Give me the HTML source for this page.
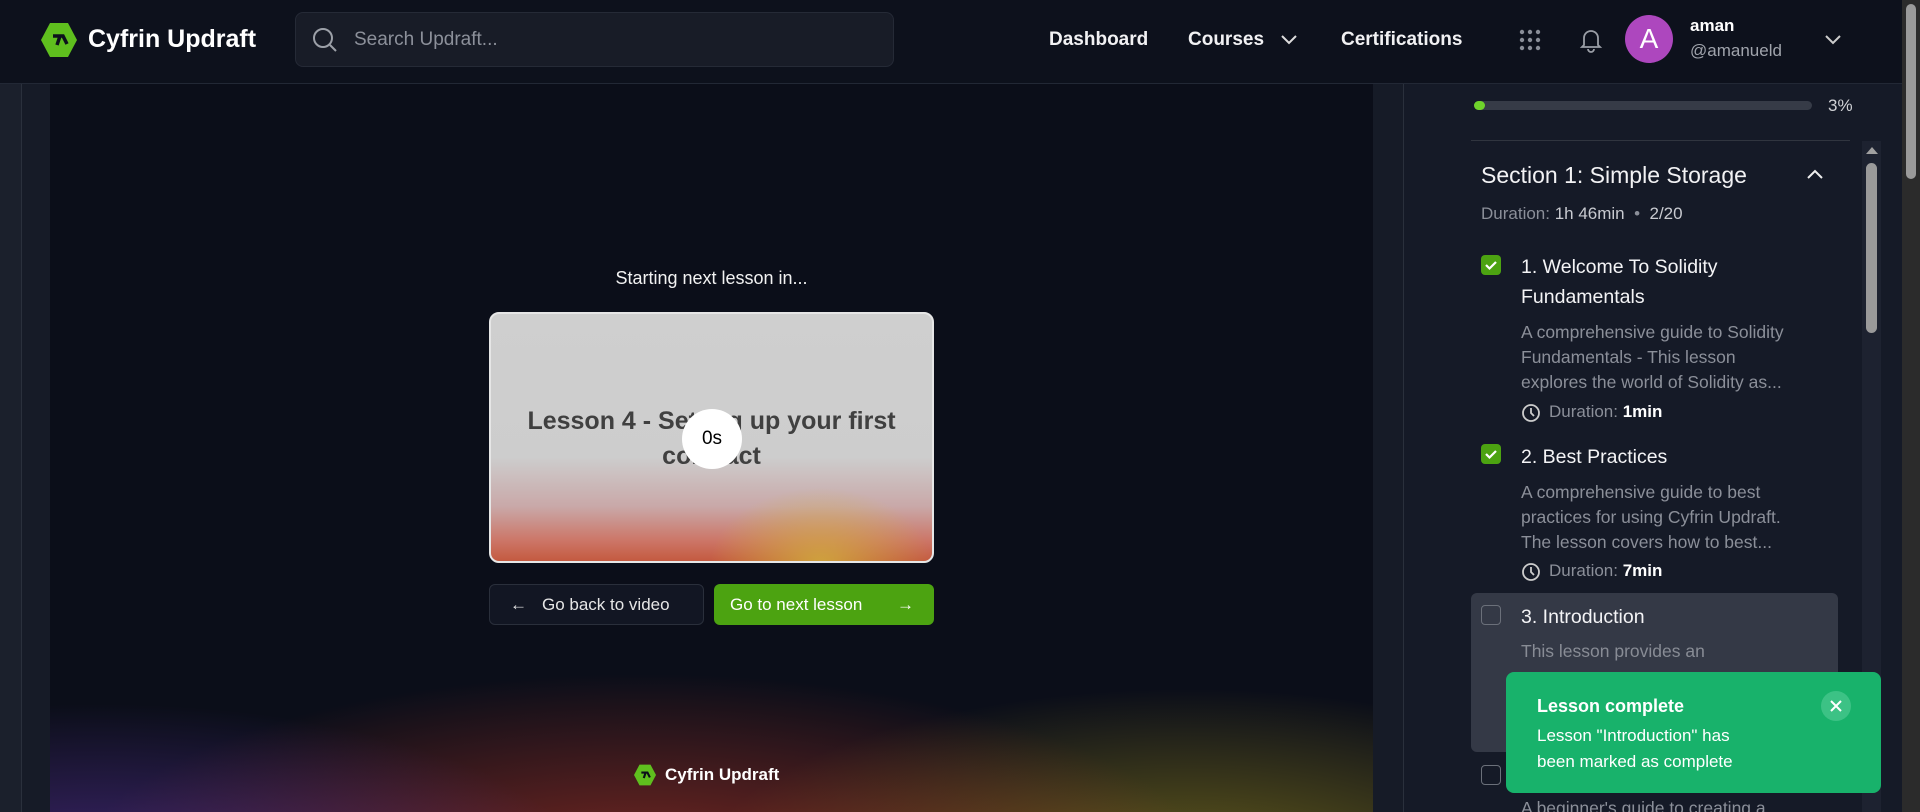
<!DOCTYPE html>
<html><head><meta charset="utf-8"><style>
*{box-sizing:border-box;margin:0;padding:0}
body{width:1920px;height:812px;overflow:hidden;background:#161b27;font-family:"Liberation Sans",sans-serif;color:#fff;position:relative}
.abs{position:absolute}
.hdr{left:0;top:0;width:1902px;height:84px;background:#0d111c;border-bottom:1px solid #222835}
.nav{font-size:19px;font-weight:bold;color:#f1f1f3;top:29px}
.video{left:50px;top:84px;width:1323px;height:728px;background:#0b0e19;overflow:hidden}
.side{left:1403px;top:84px;width:499px;height:728px;background:#151a27;border-left:1px solid #2a303c;overflow:hidden}
.t{font-size:19.5px;color:#f4f4f6;line-height:30px}
.d{font-size:17.5px;color:#8b8f99;line-height:25px;width:280px}
.cb{width:20px;height:20px;border-radius:4px}
.on{background:#4ca311}
.off{border:1.5px solid #6b707a}
.dur{font-size:17px;color:#8b8f99}
.dur b{color:#fff}
</style></head><body>
<div class="abs" style="left:0;top:84px;width:22px;height:728px;background:#1b202c;border-right:1px solid #2a303c"></div>
<div class="abs hdr">
  <svg class="abs" style="left:40px;top:22px" width="38" height="36" viewBox="0 0 38 36"><polygon points="10,1 28,1 37,18 28,35 10,35 1,18" fill="#5fbf1e"/><path d="M13 14h10l4 8M20 14l-3 9" stroke="#0d111c" stroke-width="3.5" fill="none"/></svg>
  <div class="abs" style="left:88px;top:25px;font-size:25px;font-weight:bold">Cyfrin Updraft</div>
  <div class="abs" style="left:295px;top:12px;width:599px;height:55px;background:#181c27;border:1px solid #252a36;border-radius:8px">
    <svg class="abs" style="left:15px;top:13px" width="28" height="28" viewBox="0 0 28 28"><circle cx="12" cy="12" r="9" stroke="#9ca0a8" stroke-width="2" fill="none"/><path d="M19 19l6 6" stroke="#9ca0a8" stroke-width="2"/></svg>
    <div class="abs" style="left:58px;top:16px;font-size:19px;color:#8c909a">Search Updraft...</div>
  </div>
  <div class="abs nav" style="left:1049px">Dashboard</div>
  <div class="abs nav" style="left:1188px">Courses</div>
  <svg class="abs" style="left:1280px;top:34px" width="18" height="12"><path d="M2 2l7 7 7-7" stroke="#ddd" stroke-width="2" fill="none"/></svg>
  <div class="abs nav" style="left:1341px">Certifications</div>
  <svg class="abs" style="left:1519px;top:29px" width="22" height="22"><g fill="#8a8e98"><circle cx="3" cy="3" r="2.2"/><circle cx="11" cy="3" r="2.2"/><circle cx="19" cy="3" r="2.2"/><circle cx="3" cy="11" r="2.2"/><circle cx="11" cy="11" r="2.2"/><circle cx="19" cy="11" r="2.2"/><circle cx="3" cy="19" r="2.2"/><circle cx="11" cy="19" r="2.2"/><circle cx="19" cy="19" r="2.2"/></g></svg>
  <svg class="abs" style="left:1579px;top:27px" width="24" height="26" viewBox="0 0 24 26"><path d="M5 18V11a7 7 0 0114 0v7l2 2H3z" stroke="#9a9ea6" stroke-width="1.8" fill="none"/><path d="M9 22a3 3 0 006 0" stroke="#9a9ea6" stroke-width="1.8" fill="none"/></svg>
  <div class="abs" style="left:1625px;top:15px;width:48px;height:48px;border-radius:50%;background:#ad47be;font-size:28px;text-align:center;line-height:48px">A</div>
  <div class="abs" style="left:1690px;top:16px;font-size:17px;font-weight:bold">aman</div>
  <div class="abs" style="left:1690px;top:41px;font-size:17px;color:#a0a4ac">@amanueld</div>
  <svg class="abs" style="left:1824px;top:34px" width="18" height="12"><path d="M2 2l7 7 7-7" stroke="#ccc" stroke-width="2" fill="none"/></svg>
</div>
<div class="abs video">
  <div class="abs" style="left:-150px;top:500px;width:1650px;height:300px;background:radial-gradient(ellipse 30% 60% at 12% 100%,rgba(110,60,190,.55),transparent),radial-gradient(ellipse 35% 70% at 45% 100%,rgba(210,60,40,.6),transparent),radial-gradient(ellipse 30% 65% at 78% 100%,rgba(190,170,30,.55),transparent)"></div>
  <div class="abs" style="left:0;width:1323px;top:184px;text-align:center;font-size:18px;color:#f2f2f2">Starting next lesson in...</div>
  <div class="abs" style="left:439px;top:228px;width:445px;height:251px;border-radius:10px;border:2px solid #e6e6e6;background:linear-gradient(180deg,#cfcfcf 0%,#cdcdcd 58%,#c9a8a8 78%,#cc7566 92%,#c45a40 100%);overflow:hidden">
    <div class="abs" style="left:200px;top:160px;width:260px;height:100px;background:radial-gradient(ellipse at 50% 90%,rgba(210,180,60,.8),transparent 60%)"></div>
    <div class="abs" style="left:0;width:441px;top:90px;text-align:center;font-size:25px;font-weight:bold;color:#404040;line-height:35px">Lesson 4 - Setting up your first<br>contract</div>
    <div class="abs" style="left:191px;top:95px;width:60px;height:60px;border-radius:50%;background:#fff;color:#000;font-size:19px;text-align:center;line-height:60px">0s</div>
  </div>
  <div class="abs" style="left:439px;top:500px;width:215px;height:41px;border:1px solid #2a2f3b;background:#121623;border-radius:6px;font-size:17px;color:#e6e6e6;line-height:39px;padding-left:52px">Go back to video<span class="abs" style="left:20px;top:0">←</span></div>
  <div class="abs" style="left:664px;top:500px;width:220px;height:41px;background:#4ca311;border-radius:6px;font-size:17px;color:#fff;line-height:41px;padding-left:16px">Go to next lesson<span class="abs" style="left:183px;top:0">→</span></div>
  <svg class="abs" style="left:583px;top:680px" width="24" height="22" viewBox="0 0 38 36"><polygon points="10,1 28,1 37,18 28,35 10,35 1,18" fill="#5fbf1e"/><path d="M13 14h10l4 8M20 14l-3 9" stroke="#0b0e19" stroke-width="3.5" fill="none"/></svg>
  <div class="abs" style="left:615px;top:681px;font-size:17px;font-weight:bold">Cyfrin Updraft</div>
</div>
<div class="abs side">
  <div class="abs" style="left:70px;top:17px;width:338px;height:9px;border-radius:5px;background:#363b47"><div style="width:11px;height:9px;border-radius:5px;background:#6fd32b"></div></div>
  <div class="abs" style="left:424px;top:12px;font-size:17px;color:#d0d2d6">3%</div>
  <div class="abs" style="left:67px;top:56px;width:379px;height:1px;background:#30353f"></div>
  <div class="abs" style="left:458px;top:57px;width:19px;height:671px;background:#1d2230"><div class="abs" style="left:4px;top:6px;border:6px solid transparent;border-bottom:7px solid #a0a0a0;border-top:0"></div><div class="abs" style="left:4px;top:22px;width:11px;height:170px;border-radius:6px;background:#9a9a9a"></div></div>
  <div class="abs" style="left:77px;top:78px;font-size:23px;color:#f2f2f4">Section 1: Simple Storage</div>
  <svg class="abs" style="left:402px;top:84px" width="18" height="12"><path d="M2 10l7-7 7 7" stroke="#eee" stroke-width="2" fill="none"/></svg>
  <div class="abs" style="left:77px;top:120px;font-size:17px;color:#8b8f99">Duration: <span style="color:#c8cad0">1h 46min</span> &nbsp;•&nbsp; <span style="color:#c8cad0">2/20</span></div>
  <div class="abs cb on" style="left:77px;top:171px"><svg width="20" height="20"><path d="M5 10l3.5 3.5L15 7" stroke="#fff" stroke-width="2.2" fill="none"/></svg></div>
  <div class="abs t" style="left:117px;top:168px">1. Welcome To Solidity<br>Fundamentals</div>
  <div class="abs d" style="left:117px;top:236px">A comprehensive guide to Solidity Fundamentals - This lesson explores the world of Solidity as...</div>
  <svg class="abs" style="left:117px;top:319px" width="20" height="20"><circle cx="10" cy="10" r="8" stroke="#ccc" stroke-width="1.8" fill="none"/><path d="M10 5v5l3 3" stroke="#ccc" stroke-width="1.8" fill="none"/></svg>
  <div class="abs dur" style="left:145px;top:318px">Duration: <b>1min</b></div>
  <div class="abs cb on" style="left:77px;top:360px"><svg width="20" height="20"><path d="M5 10l3.5 3.5L15 7" stroke="#fff" stroke-width="2.2" fill="none"/></svg></div>
  <div class="abs t" style="left:117px;top:358px">2. Best Practices</div>
  <div class="abs d" style="left:117px;top:396px">A comprehensive guide to best practices for using Cyfrin Updraft. The lesson covers how to best...</div>
  <svg class="abs" style="left:117px;top:478px" width="20" height="20"><circle cx="10" cy="10" r="8" stroke="#ccc" stroke-width="1.8" fill="none"/><path d="M10 5v5l3 3" stroke="#ccc" stroke-width="1.8" fill="none"/></svg>
  <div class="abs dur" style="left:145px;top:477px">Duration: <b>7min</b></div>
  <div class="abs" style="left:67px;top:509px;width:367px;height:159px;background:#343946;border-radius:6px">
    <div class="abs cb off" style="left:10px;top:12px"></div>
    <div class="abs t" style="left:50px;top:9px">3. Introduction</div>
    <div class="abs d" style="left:50px;top:46px;color:#888c95">This lesson provides an</div>
  </div>
  <div class="abs cb off" style="left:77px;top:681px"></div>
  <div class="abs d" style="left:117px;top:712px">A beginner's guide to creating a</div>
</div>
<div class="abs" style="left:1902px;top:0;width:18px;height:812px;background:#2b2b2b"><div class="abs" style="left:4px;top:4px;width:10px;height:175px;border-radius:5px;background:#9a9a9a"></div></div>
<div class="abs" style="left:1506px;top:672px;width:375px;height:121px;background:#18b26b;border-radius:8px">
  <div class="abs" style="left:31px;top:24px;font-size:18px;font-weight:bold">Lesson complete</div>
  <div class="abs" style="left:31px;top:51px;font-size:17px;line-height:26px">Lesson "Introduction" has<br>been marked as complete</div>
  <div class="abs" style="left:315px;top:19px;width:30px;height:30px;border-radius:50%;background:#3cc285"><svg width="30" height="30"><path d="M10 10l10 10M20 10l-10 10" stroke="#fff" stroke-width="2"/></svg></div>
</div>
</body></html>
